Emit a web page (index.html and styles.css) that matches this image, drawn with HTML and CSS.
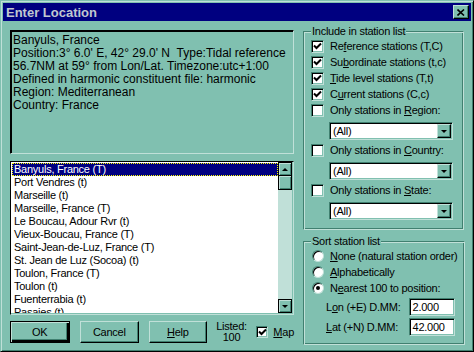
FILE: index.html
```html
<!doctype html>
<html lang="en-us">
<head>
    <title>Enter Location</title>
    <link rel="stylesheet" href="styles.css">
</head>
<body>
    <div class="window">
        <div class="titlebar">
            <span class="title">Enter Location</span>
            <span class="close">
                <svg width="8" height="7" viewBox="0 0 8 7"><path d="M0.5 0.5 L7 6.5 M7 0.5 L0.5 6.5" stroke="#000" stroke-width="1.6" fill="none"/></svg>
            </span>
        </div>

        <div class="dialog">
            <div class="left">
                <div class="info">
                    <div>Banyuls, France</div>
                    <div>Position:3° 6.0' E, 42° 29.0' N&nbsp;&nbsp;Type:Tidal reference</div>
                    <div>56.7NM at 59° from Lon/Lat. Timezone:utc+1:00</div>
                    <div>Defined in harmonic constituent file: harmonic</div>
                    <div>Region: Mediterranean</div>
                    <div>Country: France</div>
                </div>

                <div class="listbox">
                    <ul class="items">
                        <li class="selected">Banyuls, France (T)</li>
                        <li>Port Vendres (t)</li>
                        <li>Marseille (t)</li>
                        <li>Marseille, France (T)</li>
                        <li>Le Boucau, Adour Rvr (t)</li>
                        <li>Vieux-Boucau, France (T)</li>
                        <li>Saint-Jean-de-Luz, France (T)</li>
                        <li>St. Jean de Luz (Socoa) (t)</li>
                        <li>Toulon, France (T)</li>
                        <li>Toulon (t)</li>
                        <li>Fuenterrabia (t)</li>
                        <li>Pasajes (t)</li>
                    </ul>
                    <div class="scrollbar">
                        <div class="sb-button"><span class="arrow-up"></span></div>
                        <div class="sb-thumb"></div>
                        <div class="sb-track"></div>
                        <div class="sb-button"><span class="arrow-down"></span></div>
                    </div>
                </div>

                <div class="actions">
                    <button class="btn default">OK</button>
                    <button class="btn">Cancel</button>
                    <button class="btn"><u>H</u>elp</button>
                    <div class="listed">Listed:<br>100</div>
                    <label class="check map">
                        <span class="box"><svg width="9" height="9" viewBox="0 0 9 9"><path d="M1 3.5 L3.5 6 L8 1.5" stroke="#000" stroke-width="2" fill="none"/></svg></span>
                        <span><u>M</u>ap</span>
                    </label>
                </div>
            </div>

            <div class="right">
                <fieldset class="group include">
                    <legend>Include in station list</legend>
                    <label class="check">
                        <span class="box"><svg width="9" height="9" viewBox="0 0 9 9"><path d="M1 3.5 L3.5 6 L8 1.5" stroke="#000" stroke-width="2" fill="none"/></svg></span>
                        <span>Re<u>f</u>erence stations (T,C)</span>
                    </label>
                    <label class="check">
                        <span class="box"><svg width="9" height="9" viewBox="0 0 9 9"><path d="M1 3.5 L3.5 6 L8 1.5" stroke="#000" stroke-width="2" fill="none"/></svg></span>
                        <span>Su<u>b</u>ordinate stations (t,c)</span>
                    </label>
                    <label class="check">
                        <span class="box"><svg width="9" height="9" viewBox="0 0 9 9"><path d="M1 3.5 L3.5 6 L8 1.5" stroke="#000" stroke-width="2" fill="none"/></svg></span>
                        <span><u>T</u>ide level stations (T,t)</span>
                    </label>
                    <label class="check">
                        <span class="box"><svg width="9" height="9" viewBox="0 0 9 9"><path d="M1 3.5 L3.5 6 L8 1.5" stroke="#000" stroke-width="2" fill="none"/></svg></span>
                        <span>C<u>u</u>rrent stations (C,c)</span>
                    </label>
                    <label class="check">
                        <span class="box"></span>
                        <span>Only stations in <u>R</u>egion:</span>
                    </label>
                    <div class="combo"><span class="combo-value">(All)</span><span class="combo-button"><span class="arrow-down"></span></span></div>
                    <label class="check">
                        <span class="box"></span>
                        <span>Only stations in <u>C</u>ountry:</span>
                    </label>
                    <div class="combo"><span class="combo-value">(All)</span><span class="combo-button"><span class="arrow-down"></span></span></div>
                    <label class="check">
                        <span class="box"></span>
                        <span>Only stations in <u>S</u>tate:</span>
                    </label>
                    <div class="combo"><span class="combo-value">(All)</span><span class="combo-button"><span class="arrow-down"></span></span></div>
                </fieldset>

                <fieldset class="group sort">
                    <legend>Sort station list</legend>
                    <label class="radio">
                        <span class="dot"></span>
                        <span><u>N</u>one (natural station order)</span>
                    </label>
                    <label class="radio">
                        <span class="dot"></span>
                        <span><u>A</u>lphabetically</span>
                    </label>
                    <label class="radio">
                        <span class="dot on"></span>
                        <span>N<u>e</u>arest 100 to position:</span>
                    </label>
                    <div class="coord">
                        <span>L<u>o</u>n (+E) D.MM:</span>
                        <span class="field">2.000</span>
                    </div>
                    <div class="coord">
                        <span><u>L</u>at (+N) D.MM:</span>
                        <span class="field">42.000</span>
                    </div>
                </fieldset>
            </div>
        </div>
    </div>
</body>
</html>
```

FILE: styles.css
```css
/* Win95 style dialog, teal scheme */
:root {
    --face: #80c0b0;
    --light: #c0e0d8;
    --dark: #408070;
}

body {
    margin: 0;
    background-color: var(--face);
    font-family: "Liberation Sans", Arial, sans-serif;
    font-size: 11px;
    letter-spacing: -0.25px;
    color: #000;
}

u {
    text-decoration: underline;
    text-underline-offset: 1px;
}

.window {
    width: 474px;
    height: 352px;
    box-sizing: border-box;
    border: 1px solid;
    border-color: var(--face) #000 #000 var(--face);
    box-shadow: inset 1px 1px var(--light), inset -1px -1px var(--dark);
    padding: 2px;
    background-color: var(--face);
    display: flex;
    flex-direction: column;
}

.titlebar {
    height: 18px;
    background-color: #000080;
    display: flex;
    align-items: center;
    justify-content: space-between;
    padding: 0 2px 0 3px;
}

.title {
    color: #c0c8d0;
    font-weight: bold;
    font-size: 13px;
    letter-spacing: 0;
}

.close {
    width: 16px;
    height: 14px;
    box-sizing: border-box;
    background-color: var(--face);
    border: 1px solid;
    border-color: var(--light) #000 #000 var(--light);
    box-shadow: inset -1px -1px var(--dark);
    display: flex;
    align-items: center;
    justify-content: center;
}

.dialog {
    display: flex;
    gap: 9px;
    padding: 4px 0 0 7px;
}

/* left column */
.left {
    width: 284px;
    display: flex;
    flex-direction: column;
}

.info {
    margin-top: 5px;
    height: 124px;
    box-sizing: border-box;
    border: 1px solid;
    border-color: #000 var(--light) var(--light) #000;
    box-shadow: inset 1px 1px #000;
    padding: 3px 2px;
    font-size: 12px;
    letter-spacing: 0;
    line-height: 13px;
    white-space: nowrap;
    overflow: hidden;
}

.listbox {
    margin-top: 7px;
    height: 154px;
    box-sizing: border-box;
    border: 1px solid;
    border-color: #000 var(--light) var(--light) #000;
    box-shadow: inset -1px -1px var(--face);
    padding: 0 1px 1px 1px;
    background-color: #fff;
    display: flex;
}

.items {
    flex: 1;
    list-style: none;
    margin: 0;
    padding: 1px 0 0 0;
    overflow: hidden;
}

.items li {
    height: 13px;
    line-height: 13px;
    padding-left: 2px;
    white-space: nowrap;
}

.items li.selected {
    background-color: #000080;
    color: #fff;
    outline: 1px dotted #ffff00;
    outline-offset: -1px;
}

.scrollbar {
    width: 14px;
    display: flex;
    flex-direction: column;
    background-color: var(--light);
}

.sb-button,
.sb-thumb {
    height: 14px;
    box-sizing: border-box;
    background-color: var(--face);
    border: 1px solid #000;
    box-shadow: inset 1px 1px var(--light), inset -1px -1px var(--dark);
    display: flex;
    align-items: center;
    justify-content: center;
}

.sb-thumb {
    border-top: none;
}

.sb-track {
    flex: 1;
}

.arrow-up {
    width: 0;
    height: 0;
    border-left: 3px solid transparent;
    border-right: 3px solid transparent;
    border-bottom: 3px solid #000;
}

.arrow-down {
    width: 0;
    height: 0;
    border-left: 3px solid transparent;
    border-right: 3px solid transparent;
    border-top: 3px solid #000;
}

.actions {
    margin-top: 6px;
    height: 22px;
    display: flex;
    align-items: center;
}

.btn {
    width: 60px;
    height: 22px;
    margin: 0 10px 0 0;
    padding: 0;
    box-sizing: border-box;
    font: inherit;
    letter-spacing: inherit;
    color: #000;
    background-color: var(--face);
    border: 1px solid;
    border-color: var(--light) #000 #000 var(--light);
    box-shadow: inset -1px -1px var(--dark);
}

.btn.default {
    border-color: #000;
    box-shadow: inset 1px 1px var(--light), inset -2px -2px #000, inset -3px -3px var(--dark);
}

.btn:last-of-type {
    width: 58px;
    margin-right: 0;
}

.listed {
    width: 32px;
    margin-left: 9px;
    text-align: center;
    line-height: 11px;
}

/* checkboxes */
.check {
    height: 16px;
    display: flex;
    align-items: center;
    gap: 6px;
    white-space: nowrap;
}

.box {
    width: 13px;
    height: 13px;
    box-sizing: border-box;
    background-color: #fff;
    border: 1px solid;
    border-color: var(--dark) var(--light) var(--light) var(--dark);
    box-shadow: inset 1px 1px #000, inset -1px -1px var(--face);
    display: flex;
    align-items: center;
    justify-content: center;
    flex-shrink: 0;
}

.check.map {
    margin-left: 9px;
    gap: 5px;
}

.check.map .box {
    width: 12px;
    height: 12px;
}

/* right column */
.right {
    display: flex;
    flex-direction: column;
}

.group {
    width: 161px;
    box-sizing: border-box;
    margin: 0;
    padding: 0 6px 7px 7px;
    border: 1px solid;
    border-color: var(--dark) var(--light) var(--light) var(--dark);
    box-shadow: inset 1px 1px var(--light), inset -1px -1px var(--dark);
}

.group legend {
    padding: 0 1px;
    margin-left: 0;
    line-height: 13px;
    background-color: var(--face);
}

.sort {
    margin-top: 5px;
    padding-bottom: 8px;
}

.combo {
    width: 124px;
    height: 18px;
    box-sizing: border-box;
    margin: 4px 0 2px 18px;
    background-color: #fff;
    border: 1px solid;
    border-color: var(--dark) var(--light) var(--light) var(--dark);
    box-shadow: inset 1px 1px #000, inset -1px -1px var(--face);
    padding: 1px;
    display: flex;
}

.combo-value {
    flex: 1;
    padding-left: 2px;
    line-height: 15px;
}

.combo-button {
    width: 14px;
    box-sizing: border-box;
    background-color: var(--face);
    border: 1px solid;
    border-color: var(--light) #000 #000 var(--light);
    box-shadow: inset -1px -1px var(--dark);
    display: flex;
    align-items: center;
    justify-content: center;
}

/* radios */
.radio {
    height: 16px;
    display: flex;
    align-items: center;
    gap: 6px;
    white-space: nowrap;
}

.dot {
    width: 12px;
    height: 12px;
    margin-left: 1px;
    box-sizing: border-box;
    border-radius: 50%;
    background-color: #fff;
    border: 1px solid;
    border-color: var(--dark) var(--light) var(--light) var(--dark);
    box-shadow: inset 1px 1px #000;
    position: relative;
    flex-shrink: 0;
}

.dot.on::after {
    content: "";
    position: absolute;
    left: 3px;
    top: 3px;
    width: 4px;
    height: 4px;
    border-radius: 50%;
    background-color: #000;
}

.coord {
    height: 18px;
    margin-top: 2px;
    padding-left: 15px;
    display: flex;
    align-items: center;
    justify-content: space-between;
}

.field {
    width: 46px;
    height: 18px;
    box-sizing: border-box;
    margin-right: 3px;
    background-color: #fff;
    border: 1px solid;
    border-color: var(--dark) var(--light) var(--light) var(--dark);
    box-shadow: inset 1px 1px #000, inset -1px -1px var(--face);
    padding: 0 3px;
    line-height: 16px;
}
```
